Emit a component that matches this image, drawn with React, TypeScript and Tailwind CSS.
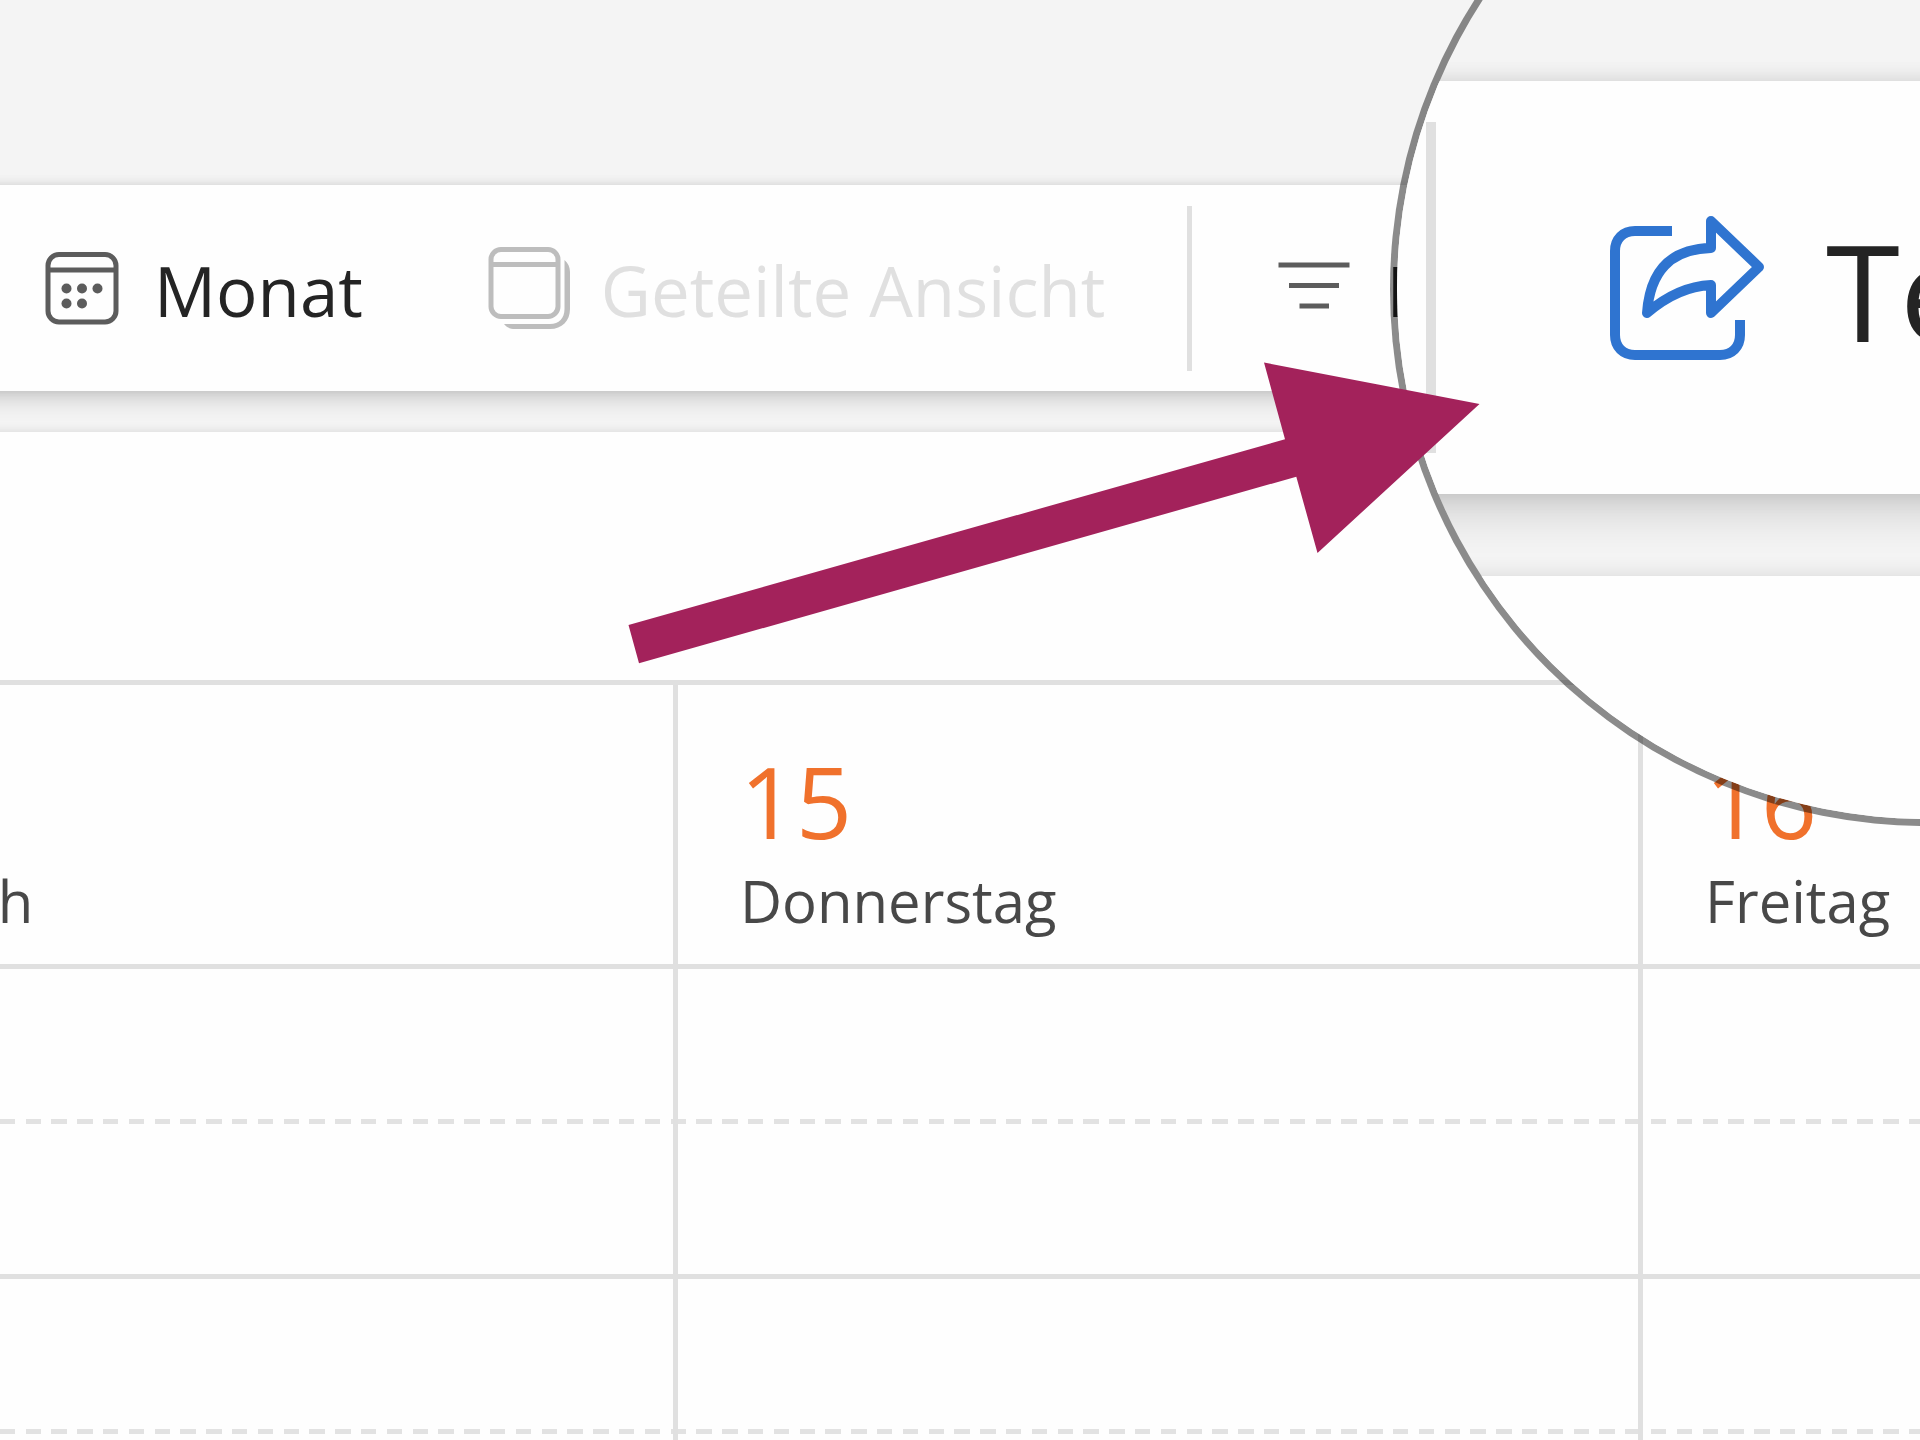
import React from 'react';

interface Day {
  date: number;
  name: string;
}

const days: Day[] = [
  { date: 14, name: 'Mittwoch' },
  { date: 15, name: 'Donnerstag' },
  { date: 16, name: 'Freitag' },
];

// Two rows per hour: full line on the hour, dashed line on the half hour
const slots = ['08:00', '08:30', '09:00', '09:30'];

const MonthIcon = () => (
  <svg viewBox="0 0 84 84" className="size-21 shrink-0" fill="none" stroke="#5c5c5c" strokeWidth="5" aria-hidden="true">
    <rect x="8" y="8.5" width="68" height="67.5" rx="11" />
    <path d="M8 24H76" />
    <g fill="#5c5c5c" stroke="none">
      <circle cx="26.5" cy="42.5" r="5" />
      <circle cx="42" cy="42.5" r="5" />
      <circle cx="57.5" cy="42.5" r="5" />
      <circle cx="26.5" cy="57.5" r="5" />
      <circle cx="42" cy="57.5" r="5" />
    </g>
  </svg>
);

const SplitViewIcon = () => (
  <svg viewBox="0 0 84 84" className="size-21 shrink-0" fill="none" stroke="#bdbdbd" strokeWidth="5" aria-hidden="true">
    <rect x="4" y="3.5" width="67" height="67" rx="10" />
    <path d="M4 18.5H71" />
    <path
      d="M77.5 14C81 17 83 21 83 26V63C83 75 75 83 63 83H28C23 83 19 81 17 78H63C72 78 77.5 72 77.5 63Z"
      fill="#bdbdbd"
      stroke="none"
    />
  </svg>
);

const FilterIcon = () => (
  <svg viewBox="0 0 84 84" className="size-21 shrink-0" fill="none" stroke="#5c5c5c" strokeWidth="5" aria-hidden="true">
    <path d="M6.5 19H77.5M17 39.5H67M27.5 60H57" />
  </svg>
);

const ShareIcon = () => (
  <svg
    viewBox="-2 0 168 168"
    className="size-42 shrink-0"
    fill="none"
    stroke="#2f74d0"
    strokeWidth="10"
    strokeLinejoin="round"
    aria-hidden="true"
  >
    <path d="M74 27H37C25 27 17 35 17 47V131C17 143 25 151 37 151H122C134 151 142 143 142 131V116" />
    <path d="M49 109C52 68 72 45 113 44V17L161 63L113 109V81C91 82 70 91 49 109Z" />
  </svg>
);

const Toolbar = () => (
  <header className="relative z-10 -mx-10 flex h-[206px] shrink-0 items-center bg-[#fefefe] pl-20 text-[69px] whitespace-nowrap text-[#242424] shadow-[0_0_10px_rgba(0,0,0,0.12),0_10px_20px_rgba(0,0,0,0.14)]">
    <div className="flex gap-31">
      <button type="button" className="flex items-center gap-[30px]">
        <MonthIcon />
        <span className="pt-1 leading-20">Monat</span>
      </button>
      <button type="button" disabled className="flex items-center gap-[30px] text-[#e0e0e0]">
        <SplitViewIcon />
        <span className="pt-1 leading-20">Geteilte Ansicht</span>
      </button>
    </div>
    <div className="mr-20 ml-[82px] h-[165px] w-[5px] shrink-0 bg-[#e0e0e0]" />
    <button type="button" className="flex items-center gap-[30px]">
      <FilterIcon />
      <span className="pt-1 leading-20">Filter</span>
    </button>
  </header>
);

const WeekView = () => (
  <main className="-mx-10 mt-[41px] grow bg-[#fefefe] px-10 pt-62 shadow-[0_0_10px_rgba(0,0,0,0.12)]">
    <table className="-ml-[285px] w-[calc(100%+285px)] table-fixed border-separate border-spacing-0">
      <colgroup>
        <col className="w-[958px]" />
        <col className="w-[965px]" />
        <col />
      </colgroup>
      <thead>
        <tr>
          {days.map((day) => (
            <th
              key={day.date}
              scope="col"
              className="h-71 border-t-[5px] border-l-[5px] border-[#e0e0e0] pt-[58px] pl-[62px] text-left align-top font-normal"
            >
              <div className="text-[98px] leading-[116px] text-[#f0712c]">{day.date}</div>
              <div className="text-[58px] leading-[84px] text-[#484848]">{day.name}</div>
            </th>
          ))}
        </tr>
      </thead>
      <tbody>
        {slots.map((slot) => (
          <tr
            key={slot}
            className={
              slot.endsWith(':30')
                ? 'bg-[linear-gradient(90deg,#e2e2e2_15px,transparent_15px_26px,#e2e2e2_26px_41px,transparent_41px_52px,#e2e2e2_52px_67px,transparent_67px_77px,#e2e2e2_77px_93px,transparent_93px_103px,#e2e2e2_103px_119px,transparent_119px)] bg-[length:129px_5px] bg-[position:1px_0] bg-repeat-x'
                : 'bg-[linear-gradient(#e0e0e0,#e0e0e0)] bg-[length:100%_5px] bg-no-repeat'
            }
          >
            {days.map((day) => (
              <td key={day.date} className="h-[155px] border-l-[5px] border-[#e0e0e0]" />
            ))}
          </tr>
        ))}
      </tbody>
    </table>
  </main>
);

// Magnifier: the toolbar at twice its size, the ring lets the page shine through
const Lens = () => (
  <div className="absolute -top-62 left-[1390px] z-20 size-[1074px] overflow-hidden rounded-full border-[7px] border-black/45 bg-[#f4f4f4] bg-clip-padding">
    <div className="flex h-full flex-col">
      <div className="h-[322px] shrink-0" />
      <div className="relative z-10 flex h-[413px] shrink-0 items-center bg-[#fefefe] pl-[29px] text-[134px] whitespace-nowrap text-[#242424] shadow-[0_0_20px_rgba(0,0,0,0.12),0_20px_40px_rgba(0,0,0,0.14)]">
        <div className="mr-40 h-[331px] w-[10px] shrink-0 bg-[#e0e0e0]" />
        <button type="button" className="flex items-center gap-[62px]">
          <ShareIcon />
          <span className="pt-1 leading-40">Teilen</span>
        </button>
      </div>
      <div className="mt-[82px] grow bg-[#fefefe] shadow-[0_0_20px_rgba(0,0,0,0.12)]" />
    </div>
  </div>
);

const Arrow = () => (
  <svg
    viewBox="0 0 852 302"
    className="pointer-events-none absolute top-[362px] left-[628px] z-30 h-[302px] w-[852px]"
    fill="#a3225b"
    aria-hidden="true"
  >
    <path d="M0.5 263L657 77.3L636 0.5L851.5 42L689.5 191L668.3 114.7L11 301.3Z" />
  </svg>
);

const App: React.FC = () => {
  return (
    <div className="relative flex h-screen flex-col overflow-hidden bg-[#f4f4f4] pt-[185px] font-['Open_Sans','Noto_Sans',sans-serif]">
      <Toolbar />
      <WeekView />
      <Lens />
      <Arrow />
    </div>
  );
};

export default App;
